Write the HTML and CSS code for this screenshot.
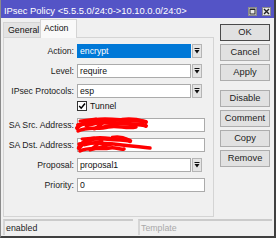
FILE: index.html
```html
<!DOCTYPE html>
<html lang="en">
<head>
    <meta charset="UTF-8">
    <title>IPsec Policy</title>
    <link rel="stylesheet" href="styles.css">
</head>
<body>
    <div class="window">
        <div class="titlebar">
            <span class="title">IPsec Policy &lt;5.5.5.0/24:0-&gt;10.10.0.0/24:0&gt;</span>
            <span class="tb-btns">
                <span class="tb-btn"><svg width="7" height="7" viewBox="0 0 7 7"><rect x="1" y="1" width="5" height="5" fill="none" stroke="#222" stroke-width="1"/><line x1="1" y1="1.5" x2="6" y2="1.5" stroke="#222" stroke-width="1"/></svg></span>
                <span class="tb-btn"><svg width="7" height="7" viewBox="0 0 7 7"><path d="M1 1 L6 6 M6 1 L1 6" stroke="#222" stroke-width="1.4"/></svg></span>
            </span>
        </div>

        <div class="content">
            <div class="left">
                <div class="tabs">
                    <div class="tab">General</div>
                    <div class="tab active">Action</div>
                </div>
                <div class="panel">
                    <div class="row">
                        <span class="label">Action:</span>
                        <div class="field sel hl">encrypt</div>
                        <span class="drop"><svg width="8" height="12" viewBox="0 0 8 12"><line x1="1.5" y1="3.5" x2="6.5" y2="3.5" stroke="#111"/><polygon points="1.5,5 6.5,5 4,8.5" fill="#111"/></svg></span>
                    </div>
                    <div class="row">
                        <span class="label">Level:</span>
                        <div class="field sel">require</div>
                        <span class="drop"><svg width="8" height="12" viewBox="0 0 8 12"><line x1="1.5" y1="3.5" x2="6.5" y2="3.5" stroke="#111"/><polygon points="1.5,5 6.5,5 4,8.5" fill="#111"/></svg></span>
                    </div>
                    <div class="row">
                        <span class="label">IPsec Protocols:</span>
                        <div class="field sel">esp</div>
                        <span class="drop"><svg width="8" height="12" viewBox="0 0 8 12"><line x1="1.5" y1="3.5" x2="6.5" y2="3.5" stroke="#111"/><polygon points="1.5,5 6.5,5 4,8.5" fill="#111"/></svg></span>
                    </div>
                    <div class="row row-check">
                        <span class="label"></span>
                        <span class="check"><svg width="8" height="8" viewBox="0 0 8 8"><path d="M1.2 4 L3.2 6.2 L7 1.5" fill="none" stroke="#000" stroke-width="1.5"/></svg></span>
                        <span class="check-text">Tunnel</span>
                    </div>
                    <div class="row">
                        <span class="label">SA Src. Address:</span>
                        <div class="field"></div>
                    </div>
                    <div class="row">
                        <span class="label">SA Dst. Address:</span>
                        <div class="field"></div>
                    </div>
                    <div class="row">
                        <span class="label">Proposal:</span>
                        <div class="field sel">proposal1</div>
                        <span class="drop"><svg width="8" height="12" viewBox="0 0 8 12"><line x1="1.5" y1="3.5" x2="6.5" y2="3.5" stroke="#111"/><polygon points="1.5,5 6.5,5 4,8.5" fill="#111"/></svg></span>
                    </div>
                    <div class="row">
                        <span class="label">Priority:</span>
                        <div class="field">0</div>
                    </div>

                    <!-- redaction marks drawn over the address fields -->
                    <svg class="scribble" width="211" height="180" viewBox="3 37 211 180">
                        <g fill="none" stroke="#f00" stroke-linecap="round" stroke-linejoin="round">
                            <path d="M77 128 C86 119 100 118 120 120 C132 121 140 120 146 122" stroke-width="4"/>
                            <path d="M78 125 C92 121 110 122 130 124 C138 125 143 124 146 126" stroke-width="4"/>
                            <path d="M78 131 C88 126 98 130 108 127 C118 125 126 129 136 127" stroke-width="3.5"/>
                            <path d="M80 121 L96 119 L86 126 L106 121 L94 129 L116 124" stroke-width="3"/>
                            <path d="M122 119 C130 118 138 119 144 121" stroke-width="2.5"/>
                            <path d="M79 148 C84 138 96 137 110 139 C120 140 126 139 130 141" stroke-width="4.5"/>
                            <path d="M79 144 C92 142 104 143 122 145 C132 146 142 147 150 148" stroke-width="3.5"/>
                            <path d="M80 151 C90 146 100 150 110 148 C116 147 120 150 124 149" stroke-width="3.5"/>
                            <path d="M82 139 L94 138 L84 145 L102 141 L90 150 L112 144" stroke-width="3"/>
                            <path d="M112 137 C118 136 124 137 128 139" stroke-width="2.5"/>
                        </g>
                    </svg>
                </div>
            </div>

            <div class="buttons">
                <div class="btn default">OK</div>
                <div class="btn">Cancel</div>
                <div class="btn">Apply</div>
                <div class="btn spaced">Disable</div>
                <div class="btn">Comment</div>
                <div class="btn">Copy</div>
                <div class="btn">Remove</div>
            </div>
        </div>

        <div class="statusbar">
            <div class="sfield first">enabled</div>
            <div class="sfield dim">Template</div>
        </div>
    </div>
</body>
</html>
```

FILE: styles.css
```css
* {
    box-sizing: border-box;
}
body {
    margin: 0;
    background: #fff;
    font-family: 'Liberation Sans', Arial, sans-serif;
    color: #111;
}
.window {
    width: 276px;
    height: 238px;
    background: #f0f0f0;
    border-left: 1px solid #8a8a8a;
    border-right: 2px solid #404040;
    border-bottom: 2px solid #404040;
    display: flex;
    flex-direction: column;
}
.titlebar {
    height: 18px;
    background: #5454c6;
    color: #fff;
    font-size: 9.4px;
    display: flex;
    justify-content: space-between;
    align-items: center;
    padding: 3px 3px 0 3px;
}
.tb-btns {
    display: flex;
    gap: 5px;
    align-self: flex-end;
    margin-bottom: 2px;
}
.tb-btn {
    width: 9px;
    height: 9px;
    background: #e9e9e9;
    border: 1px solid #8c8c8c;
    display: flex;
    align-items: center;
    justify-content: center;
}
.tb-btn svg {
    display: block;
}
.content {
    display: flex;
    height: 199px;
}
.left {
    padding-left: 2px;
    width: 213px;
}
.tabs {
    height: 19px;
    display: flex;
    align-items: flex-end;
    font-size: 8.8px;
    position: relative;
    z-index: 1;
}
.tab {
    height: 15px;
    width: 38px;
    background: #e3e3e3;
    border: 1px solid #d4d4d4;
    border-bottom: none;
    padding-left: 4px;
    line-height: 14px;
}
.tab.active {
    height: 19px;
    width: 37px;
    margin-left: -1px;
    margin-bottom: -1px;
    background: #f9f9f9;
    border-color: #d4d4d4;
    padding-left: 3px;
    line-height: 16px;
}
.panel {
    position: relative;
    height: 180px;
    border: 1px solid #d4d4d4;
    background: #f0f0f0;
    padding-top: 6px;
    display: flex;
    flex-direction: column;
    gap: 6px;
    font-size: 8.7px;
}
.row {
    display: flex;
    align-items: center;
    height: 14px;
}
.label {
    width: 70px;
    text-align: right;
    color: #222;
}
.field {
    height: 14px;
    width: 128px;
    margin-left: 3px;
    background: #fff;
    border: 1px solid #ababab;
    padding-left: 2px;
    line-height: 12px;
}
.field.sel {
    width: 114px;
}
.field.hl {
    background: #0078d7;
    border-color: #0078d7;
    color: #fff;
}
.drop {
    width: 10px;
    height: 14px;
    margin-left: 1px;
    background: #e4e4e4;
    border: 1px solid #b5b5b5;
    display: flex;
    align-items: center;
    justify-content: center;
}
.drop svg {
    display: block;
}
.row-check {
    margin: -3px 0;
    align-items: flex-start;
}
.check {
    width: 10px;
    height: 10px;
    margin-left: 3px;
    background: #fff;
    border: 1px solid #333;
    display: flex;
    align-items: center;
    justify-content: center;
}
.check-text {
    margin-left: 3px;
    line-height: 10px;
}
.scribble {
    position: absolute;
    left: -1px;
    top: -1px;
    pointer-events: none;
}
.buttons {
    margin-left: 6px;
    width: 50px;
    padding-top: 6px;
    display: flex;
    flex-direction: column;
    gap: 3px;
}
.btn {
    height: 17px;
    background: #e1e1e1;
    border: 1px solid #adadad;
    font-size: 9.3px;
    text-align: center;
    line-height: 15px;
    color: #222;
}
.btn.default {
    border-color: #4a4a4a;
}
.btn.spaced {
    margin-top: 6px;
}
.statusbar {
    margin-top: 2px;
    height: 16px;
    display: flex;
    gap: 5px;
    padding: 0 2px;
    font-size: 8.8px;
}
.sfield {
    flex: 1;
    border-top: 2px solid #cbcbcb;
    border-left: 2px solid #d6d6d6;
    padding-left: 1px;
    line-height: 14px;
}
.sfield.first {
    flex: none;
    width: 130px;
    color: #222;
}
.sfield.dim {
    color: #a9a9a9;
}
```
